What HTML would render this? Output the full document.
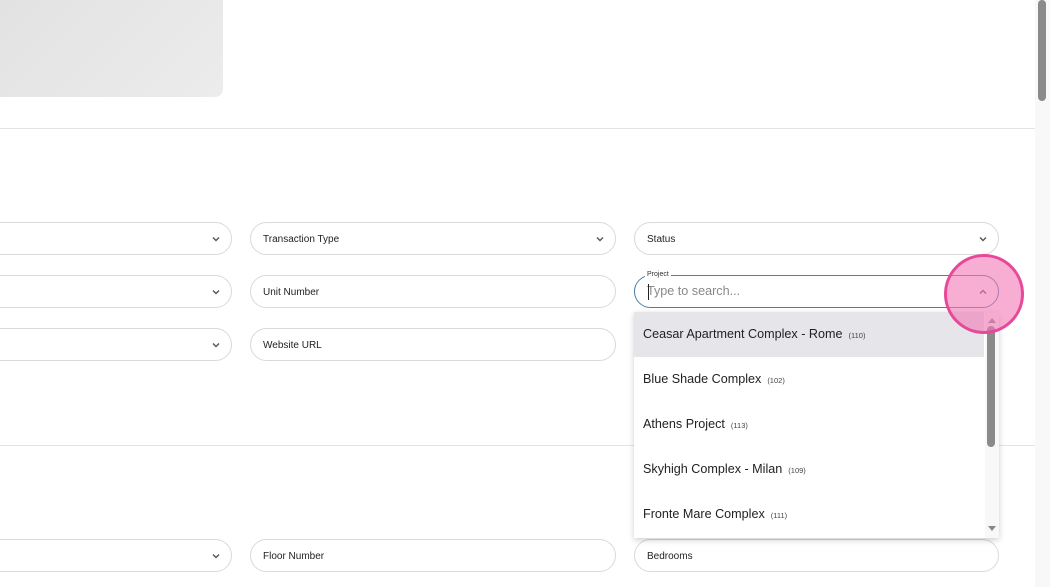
<!DOCTYPE html>
<html><head><style>
*{box-sizing:border-box;margin:0;padding:0}
body{width:1050px;height:587px;overflow:hidden;background:#fff;font-family:"Liberation Sans",Arial,sans-serif;position:relative}
.abs{position:absolute}
.inp{position:absolute;height:33px;border:1px solid #d9d9d9;border-radius:17px;background:#fff;font-size:10px;color:#222;padding-left:12px;line-height:33px}
.chev{position:absolute;right:10px;top:12px;width:10px;height:8px}
.item{position:absolute;left:0;width:350px;height:45px;font-size:12.6px;color:#222;padding-left:9px;line-height:44px}
.item small{font-size:7.5px;color:#444;margin-left:6px}
</style></head><body>
<div class="abs" style="left:0;top:0;width:223px;height:97px;background:linear-gradient(135deg,#e2e2e2,#ececec);border-bottom-right-radius:8px"></div>
<div class="abs" style="left:0;top:128px;width:1035px;height:1px;background:#e3e3e3"></div>
<div class="abs" style="left:0;top:445px;width:1035px;height:1px;background:#e3e3e3"></div>

<div class="inp" style="left:-20px;top:222px;width:252px"><svg class="chev" viewBox="0 0 10 8"><path d="M2 2.5L5 5.5L8 2.5" stroke="#555" stroke-width="1.4" fill="none"/></svg></div>
<div class="inp" style="left:250px;top:222px;width:366px">Transaction Type<svg class="chev" viewBox="0 0 10 8"><path d="M2 2.5L5 5.5L8 2.5" stroke="#555" stroke-width="1.4" fill="none"/></svg></div>
<div class="inp" style="left:634px;top:222px;width:365px">Status<svg class="chev" viewBox="0 0 10 8"><path d="M2 2.5L5 5.5L8 2.5" stroke="#555" stroke-width="1.4" fill="none"/></svg></div>

<div class="inp" style="left:-20px;top:275px;width:252px"><svg class="chev" viewBox="0 0 10 8"><path d="M2 2.5L5 5.5L8 2.5" stroke="#555" stroke-width="1.4" fill="none"/></svg></div>
<div class="inp" style="left:250px;top:275px;width:366px">Unit Number</div>
<div class="inp" style="left:634px;top:275px;width:365px;border-color:#4a7fa8;font-size:12.6px;color:#888;line-height:31px">Type to search...
<span class="abs" style="left:13px;top:8px;width:1px;height:16px;background:#222"></span>
<span class="abs" style="left:10px;top:-6px;font-size:7px;color:#333;background:#fff;padding:0 2px;line-height:9px">Project</span>
<svg class="chev" viewBox="0 0 10 8"><path d="M2 5.5L5 2.5L8 5.5" stroke="#555" stroke-width="1.4" fill="none"/></svg></div>

<div class="inp" style="left:-20px;top:328px;width:252px"><svg class="chev" viewBox="0 0 10 8"><path d="M2 2.5L5 5.5L8 2.5" stroke="#555" stroke-width="1.4" fill="none"/></svg></div>
<div class="inp" style="left:250px;top:328px;width:366px">Website URL</div>

<div class="inp" style="left:-20px;top:539px;width:252px"><svg class="chev" viewBox="0 0 10 8"><path d="M2 2.5L5 5.5L8 2.5" stroke="#555" stroke-width="1.4" fill="none"/></svg></div>
<div class="inp" style="left:250px;top:539px;width:366px">Floor Number</div>
<div class="inp" style="left:634px;top:539px;width:365px">Bedrooms</div>

<div class="abs" style="left:634px;top:312px;width:365px;height:226px;background:#fff;box-shadow:0 2px 6px rgba(0,0,0,.2);overflow:hidden">
<div class="item" style="top:0;background:#e6e6ea">Ceasar Apartment Complex - Rome<small>(110)</small></div>
<div class="item" style="top:45px">Blue Shade Complex<small>(102)</small></div>
<div class="item" style="top:90px">Athens Project<small>(113)</small></div>
<div class="item" style="top:135px">Skyhigh Complex - Milan<small>(109)</small></div>
<div class="item" style="top:180px">Fronte Mare Complex<small>(111)</small></div>
<div class="abs" style="left:351px;top:0;width:14px;height:226px;background:#f8f8f8"></div>
<svg class="abs" style="left:352px;top:4px" width="12" height="8" viewBox="0 0 12 8"><path d="M2 7L6 2L10 7Z" fill="#888"/></svg>
<div class="abs" style="left:353px;top:14px;width:8px;height:121px;background:#8a8a8a;border-radius:4px"></div>
<svg class="abs" style="left:352px;top:213px" width="12" height="8" viewBox="0 0 12 8"><path d="M2 1L6 6L10 1Z" fill="#888"/></svg>
</div>

<div class="abs" style="left:1035px;top:0;width:15px;height:587px;background:#f8f8f8"></div>
<div class="abs" style="left:1038px;top:0;width:8px;height:101px;background:#8a8a8a;border-radius:4px"></div>

<div class="abs" style="left:944px;top:254px;width:80px;height:80px;border-radius:50%;background:rgba(242,120,180,.6);border:3px solid #e8489a"></div>
</body></html>
